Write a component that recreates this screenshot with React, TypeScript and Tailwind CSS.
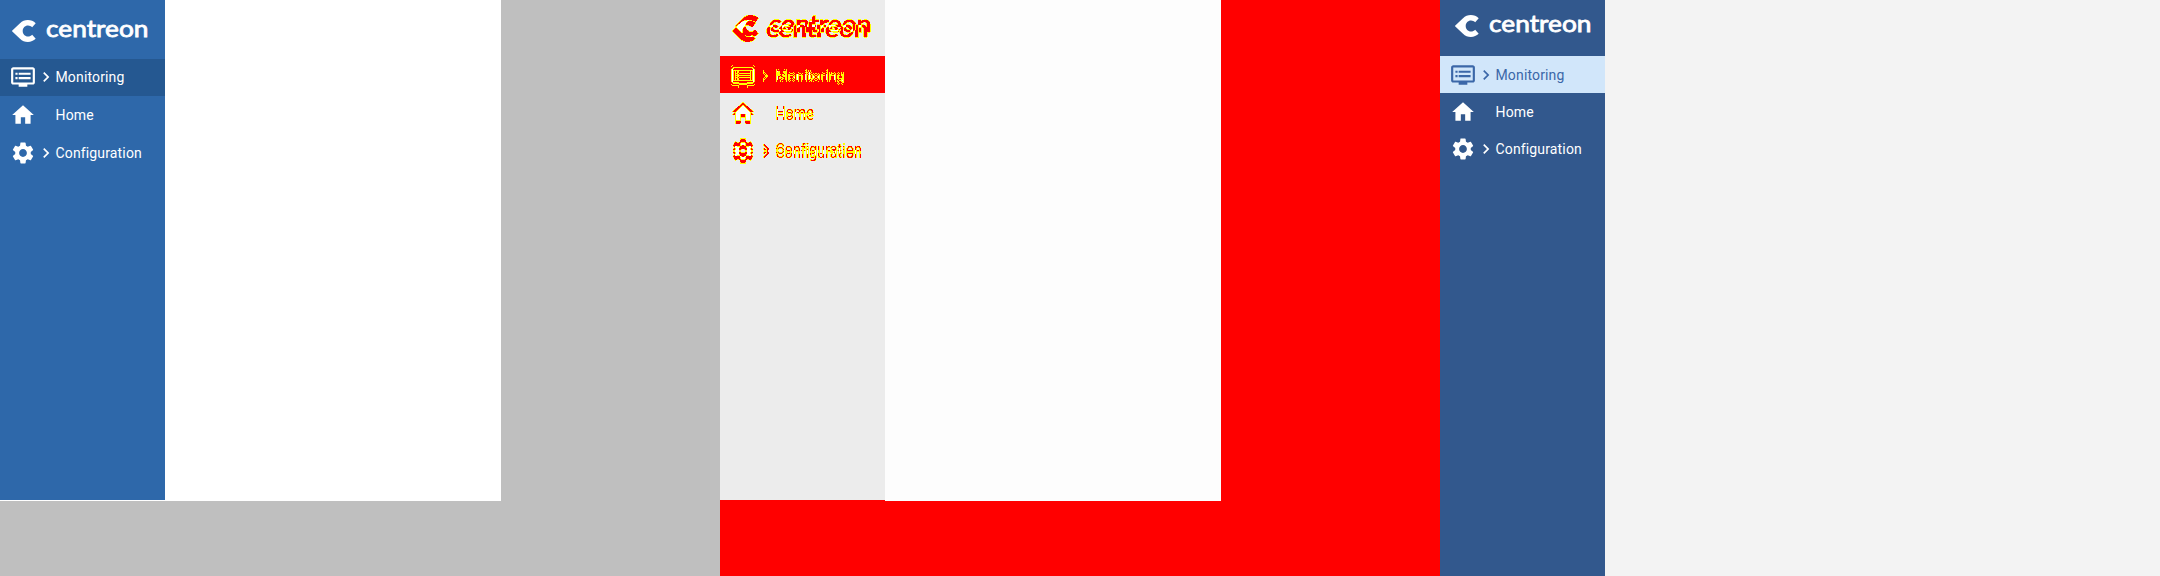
import React from 'react';
import { MdChevronRight, MdDvr, MdHome, MdSettings } from 'react-icons/md';

const items = [
  { label: 'Monitoring', Icon: MdDvr, nested: true },
  { label: 'Home', Icon: MdHome, nested: false },
  { label: 'Configuration', Icon: MdSettings, nested: true },
];

type Variant = 'before' | 'diff' | 'after';

function DiffFilter({ id, dx, dy }: { id: string; dx: number; dy: number }) {
  return (
    <filter id={id} x="-20%" y="-50%" width="140%" height="200%" colorInterpolationFilters="sRGB">
      <feOffset in="SourceAlpha" dx={dx} dy={dy} result="moved" />
      <feComposite in="SourceAlpha" in2="moved" operator="in" result="same" />
      <feFlood floodColor="#fdfdfd" result="white" />
      <feComposite in="white" in2="same" operator="in" result="base" />
      <feComposite in="SourceAlpha" in2="moved" operator="xor" result="changed" />
      <feComponentTransfer in="changed" result="edge">
        <feFuncA type="discrete" tableValues="0 1 1 1 1 1 1 1 1 1" />
      </feComponentTransfer>
      <feFlood floodColor="#ffff00" result="yellow" />
      <feComposite in="yellow" in2="edge" operator="in" result="yellowEdge" />
      <feComponentTransfer in="changed" result="core">
        <feFuncA type="discrete" tableValues="0 0 0 0 0 0 0 1 1 1" />
      </feComponentTransfer>
      <feFlood floodColor="#ff0000" result="red" />
      <feComposite in="red" in2="core" operator="in" result="redCore" />
      <feMerge>
        <feMergeNode in="base" />
        <feMergeNode in="yellowEdge" />
        <feMergeNode in="redCore" />
      </feMerge>
    </filter>
  );
}

function Logo() {
  return (
    <svg className="h-[28px] w-[141px] shrink-0 overflow-visible" viewBox="0 -3 141 28" fill="currentColor">
      <path d="M0.3 11.6Q-0.3 11 0.3 10.4L8 3.2C10.2 1.1 12.8 0 15.8 0C18.9 0 21.6 1.2 23.7 3.2L20.2 7.3C19 6.2 17.6 5.5 16 5.5C13 5.5 10.7 7.9 10.7 11C10.7 14.1 13 16.5 16 16.5C17.6 16.5 19 15.8 20.2 14.7L23.7 18.8C21.6 20.8 18.9 22 15.8 22C12.8 22 10.2 20.9 8 18.8Z" />
      <text
        x="34"
        y="17.4"
        textLength="102.5"
        lengthAdjust="spacingAndGlyphs"
        stroke="currentColor"
        strokeWidth="0.8"
        className="font-[Lato,sans-serif] text-[23.5px]"
      >
        centreon
      </text>
    </svg>
  );
}

const logoClass: Record<Variant, string> = {
  before: 'h-[59px] pt-[17px] pl-3',
  diff: 'h-14 pt-3 pl-[15px]',
  after: 'h-14 pt-3 pl-[15px]',
};
const navClass: Record<Variant, string> = {
  before: 'h-[500px] bg-[#2e68aa] text-white',
  diff: 'h-[500px] bg-[#ececec] text-white',
  after: 'h-[576px] bg-[#32588d] text-white',
};
const activeClass: Record<Variant, string> = {
  before: 'bg-[#255891]',
  diff: 'bg-[#ff0000]',
  after: 'bg-[#d1e6fa] text-[#3b67a8]',
};
const iconFilters = ['[filter:url(#shift-3)]', '[filter:url(#shift-3)]', '[filter:url(#shift-4)]'];
const textFilters = ['[filter:url(#shift-2)]', '[filter:url(#shift-3)]', '[filter:url(#shift-4)]'];

function Sidebar({ variant }: { variant: Variant }) {
  const diff = variant === 'diff';
  return (
    <nav className={`w-[165px] shrink-0 ${navClass[variant]}`}>
      <div className={`flex items-start ${logoClass[variant]}`}>
        <div className={`flex ${diff ? '[filter:url(#shift-logo)]' : ''}`}>
          <Logo />
        </div>
      </div>
      <ul className={`flex flex-col ${variant === 'before' ? 'gap-px' : ''}`}>
        {items.map(({ label, Icon, nested }, i) => (
          <li key={label} className={`h-[37px] ${i === 0 ? activeClass[variant] : ''}`}>
            <div className={`flex items-center pl-[10px] ${variant === 'before' ? 'h-[35px]' : 'h-[37px]'}`}>
              <span className={`flex shrink-0 ${diff ? iconFilters[i] : ''}`}>
                <Icon className="size-[26px] shrink-0" />
              </span>
              <span className={`w-5 shrink-0 ${diff ? textFilters[i] : ''}`}>
                {nested && <MdChevronRight className="size-5" />}
              </span>
              <span
                className={`-ml-[0.5px] font-[Roboto,sans-serif] text-[14px] leading-5 tracking-[0.15px] ${diff ? textFilters[i] : ''}`}
              >
                {label}
              </span>
            </div>
          </li>
        ))}
      </ul>
    </nav>
  );
}

export default function App() {
  return (
    <main className="relative flex h-[576px] w-[2160px] overflow-hidden">
      <svg className="absolute size-0" aria-hidden="true">
        <DiffFilter id="shift-logo" dx={-3} dy={5} />
        <DiffFilter id="shift-2" dx={0} dy={2} />
        <DiffFilter id="shift-3" dx={0} dy={3} />
        <DiffFilter id="shift-4" dx={0} dy={4} />
      </svg>
      <section className="w-[720px] shrink-0 bg-[#bfbfbf]">
        <div className="flex h-[501px] w-[501px] bg-white">
          <Sidebar variant="before" />
        </div>
      </section>
      <section className="w-[720px] shrink-0 bg-[#ff0000]">
        <div className="flex h-[501px] w-[501px]">
          <Sidebar variant="diff" />
          <div className="flex-1 bg-[#fdfdfd]" />
        </div>
      </section>
      <section className="w-[720px] shrink-0 bg-[#f3f3f3]">
        <Sidebar variant="after" />
      </section>
    </main>
  );
}
